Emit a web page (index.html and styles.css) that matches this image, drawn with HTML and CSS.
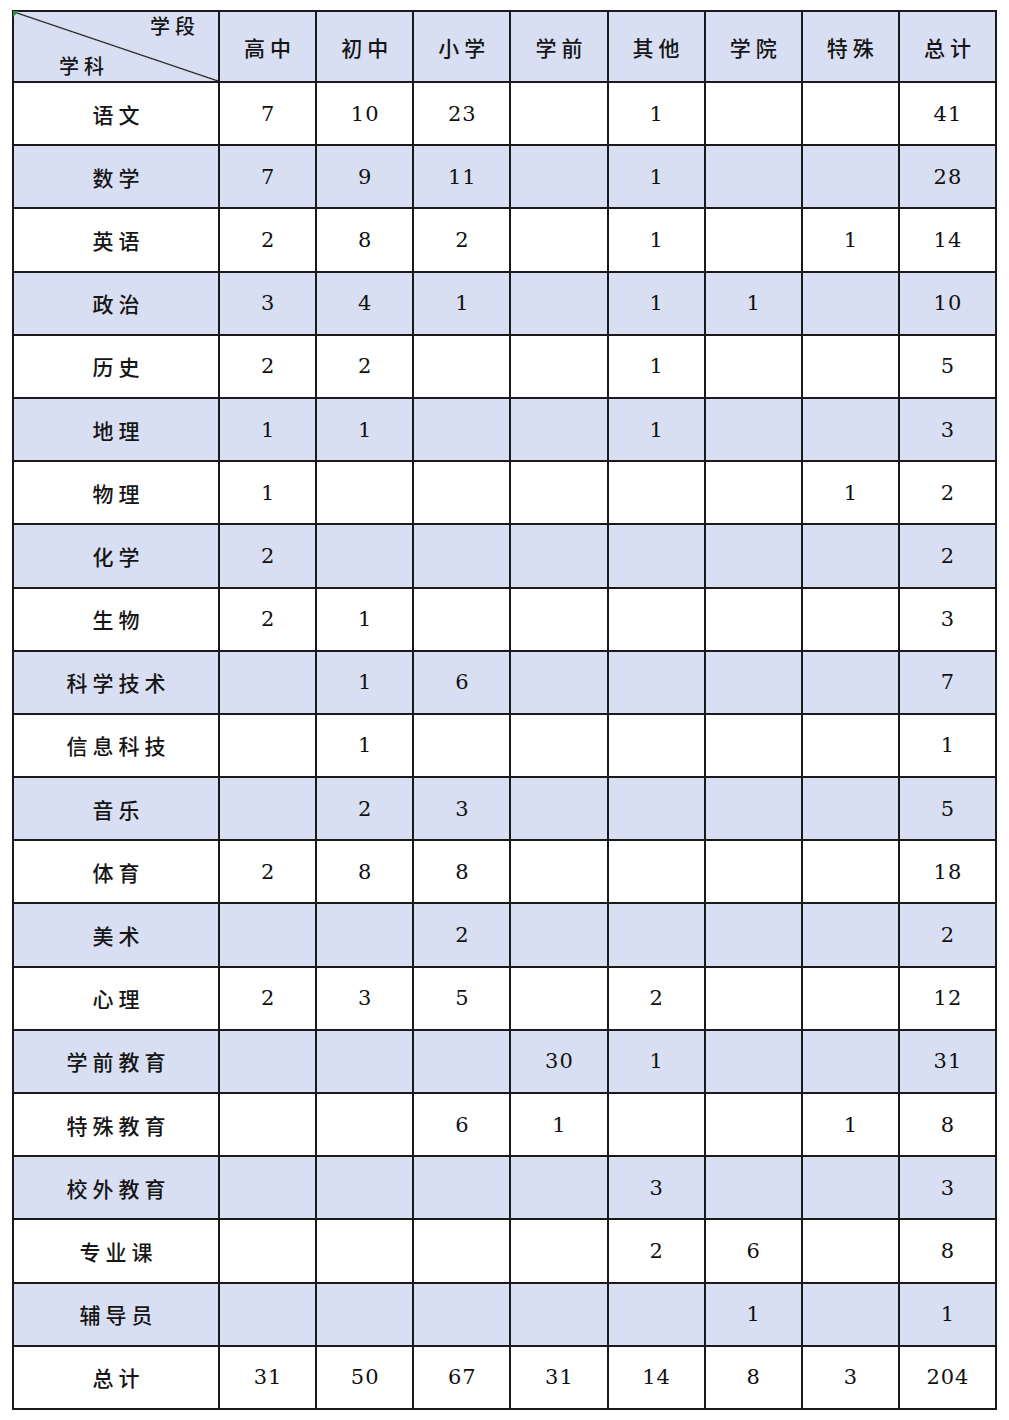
FILE: index.html
```html
<!DOCTYPE html>
<html lang="zh">
<head>
<meta charset="utf-8">
<title>学科学段统计</title>
<link rel="stylesheet" href="styles.css">
</head>
<body>
<table class="stats">
  <colgroup>
    <col class="c-subj"><col><col><col><col><col><col><col><col>
  </colgroup>
  <thead>
    <tr class="head">
      <th class="corner"><span class="c-top">学段</span><span class="c-bot">学科</span></th>
      <th>高中</th><th>初中</th><th>小学</th><th>学前</th><th>其他</th><th>学院</th><th>特殊</th><th>总计</th>
    </tr>
  </thead>
  <tbody>
    <tr><th>语文</th><td>7</td><td>10</td><td>23</td><td></td><td>1</td><td></td><td></td><td>41</td></tr>
    <tr class="alt"><th>数学</th><td>7</td><td>9</td><td>11</td><td></td><td>1</td><td></td><td></td><td>28</td></tr>
    <tr><th>英语</th><td>2</td><td>8</td><td>2</td><td></td><td>1</td><td></td><td>1</td><td>14</td></tr>
    <tr class="alt"><th>政治</th><td>3</td><td>4</td><td>1</td><td></td><td>1</td><td>1</td><td></td><td>10</td></tr>
    <tr><th>历史</th><td>2</td><td>2</td><td></td><td></td><td>1</td><td></td><td></td><td>5</td></tr>
    <tr class="alt"><th>地理</th><td>1</td><td>1</td><td></td><td></td><td>1</td><td></td><td></td><td>3</td></tr>
    <tr><th>物理</th><td>1</td><td></td><td></td><td></td><td></td><td></td><td>1</td><td>2</td></tr>
    <tr class="alt"><th>化学</th><td>2</td><td></td><td></td><td></td><td></td><td></td><td></td><td>2</td></tr>
    <tr><th>生物</th><td>2</td><td>1</td><td></td><td></td><td></td><td></td><td></td><td>3</td></tr>
    <tr class="alt"><th>科学技术</th><td></td><td>1</td><td>6</td><td></td><td></td><td></td><td></td><td>7</td></tr>
    <tr><th>信息科技</th><td></td><td>1</td><td></td><td></td><td></td><td></td><td></td><td>1</td></tr>
    <tr class="alt"><th>音乐</th><td></td><td>2</td><td>3</td><td></td><td></td><td></td><td></td><td>5</td></tr>
    <tr><th>体育</th><td>2</td><td>8</td><td>8</td><td></td><td></td><td></td><td></td><td>18</td></tr>
    <tr class="alt"><th>美术</th><td></td><td></td><td>2</td><td></td><td></td><td></td><td></td><td>2</td></tr>
    <tr><th>心理</th><td>2</td><td>3</td><td>5</td><td></td><td>2</td><td></td><td></td><td>12</td></tr>
    <tr class="alt"><th>学前教育</th><td></td><td></td><td></td><td>30</td><td>1</td><td></td><td></td><td>31</td></tr>
    <tr><th>特殊教育</th><td></td><td></td><td>6</td><td>1</td><td></td><td></td><td>1</td><td>8</td></tr>
    <tr class="alt"><th>校外教育</th><td></td><td></td><td></td><td></td><td>3</td><td></td><td></td><td>3</td></tr>
    <tr><th>专业课</th><td></td><td></td><td></td><td></td><td>2</td><td>6</td><td></td><td>8</td></tr>
    <tr class="alt"><th>辅导员</th><td></td><td></td><td></td><td></td><td></td><td>1</td><td></td><td>1</td></tr>
    <tr class="total"><th>总计</th><td>31</td><td>50</td><td>67</td><td>31</td><td>14</td><td>8</td><td>3</td><td>204</td></tr>
  </tbody>
</table>
</body>
</html>
```
FILE: styles.css
```css
html, body {
  margin: 0;
  padding: 0;
  background: #ffffff;
}
body {
  padding: 10px 0 0 12px;
  color: #161616;
  font-family: "Noto Sans CJK SC", "DejaVu Serif", serif;
}
.stats {
  border-collapse: collapse;
  table-layout: fixed;
  width: 985px;
}
.c-subj { width: 206px; }
.stats th,
.stats td {
  border: 2px solid #1a1a1a;
  text-align: center;
  vertical-align: middle;
  padding: 0;
  height: 61.2px;
}
.stats th {
  font-family: "Noto Sans CJK SC", sans-serif;
  font-weight: 500;
  font-size: 21px;
  letter-spacing: 5px;
  text-indent: 5px;
}
.stats td {
  font-family: "DejaVu Serif", "Liberation Serif", serif;
  font-size: 21px;
  letter-spacing: 1px;
  text-indent: 1px;
  color: #111;
}
.head th {
  height: 69px;
  background: #d9dff2;
}
.alt th,
.alt td {
  background: #d9dff2;
}
.corner {
  position: relative;
  background:
    linear-gradient(to top right, transparent calc(50% - 1.2px), #1a1a1a 50%, transparent calc(50% + 1.2px)),
    #d9dff2 !important;
}
.corner::before {
  content: "";
  position: absolute;
  left: -1px;
  top: -1px;
  width: 0;
  height: 0;
  border-top: 6px solid #2e8b3a;
  border-right: 6px solid transparent;
}
.c-top {
  position: absolute;
  right: 18px;
  top: 0;
  line-height: 28px;
  font-size: 20px;
}
.c-bot {
  position: absolute;
  left: 40px;
  bottom: 0;
  line-height: 30px;
  font-size: 20px;
}
```
